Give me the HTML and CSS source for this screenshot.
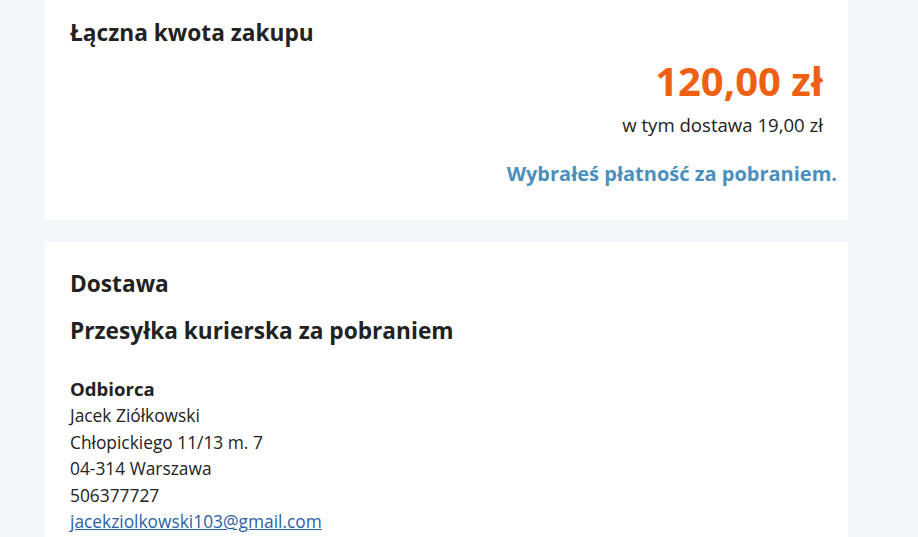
FILE: index.html
```html
<!DOCTYPE html>
<html lang="pl">
<head>
<meta charset="utf-8">
<link rel="stylesheet" href="styles.css">
</head>
<body>
<div class="page">
  <section class="card summary">
    <h2 class="title">Łączna kwota zakupu</h2>
    <div class="totals">
      <div class="price">120,00 zł</div>
      <div class="delivery-cost">w tym dostawa 19,00 zł</div>
    </div>
    <p class="payment">Wybrałeś płatność za pobraniem.</p>
  </section>
  <section class="card shipping">
    <h2 class="title">Dostawa</h2>
    <h2 class="title method">Przesyłka kurierska za pobraniem</h2>
    <div class="recipient">
      <h3 class="recipient-label">Odbiorca</h3>
      <div class="line">Jacek Ziółkowski</div>
      <div class="line">Chłopickiego 11/13 m. 7</div>
      <div class="line">04-314 Warszawa</div>
      <div class="line">506377727</div>
      <div class="line"><a class="mail" href="#">jacekziolkowski103@gmail.com</a></div>
    </div>
  </section>
</div>
</body>
</html>
```
FILE: styles.css
```css
* { box-sizing: border-box; }
html, body { margin: 0; padding: 0; }
body {
  background: #f3f6fa;
  font-family: "Open Sans", "Noto Sans", sans-serif;
  color: #222;
  height: 537px;
  overflow: hidden;
}
.page {
  width: 803px;
  margin-left: 45px;
  display: flex;
  flex-direction: column;
  gap: 22px;
}
.card {
  background: #fff;
}
.summary {
  padding: 18px 11px 25px 25px;
  height: 220px;
}
.title {
  margin: 0;
  font-size: 22.7px;
  line-height: 30px;
  font-weight: 700;
  color: #222;
}
.totals {
  text-align: right;
  padding-right: 14px;
  margin-top: 6px;
}
.price {
  font-size: 40px;
  line-height: 54px;
  font-weight: 700;
  color: #ee6014;
}
.delivery-cost {
  font-size: 18.6px;
  line-height: 26px;
  margin-top: 4px;
}
.payment {
  margin: 22px 0 0;
  text-align: right;
  font-size: 20px;
  line-height: 27px;
  font-weight: 700;
  color: #4a8fbd;
}
.shipping {
  padding: 27px 25px 20px 25px;
}
.method {
  margin-top: 17px;
}
.recipient {
  margin-top: 30px;
}
.recipient-label {
  margin: 0;
  font-size: 18.6px;
  line-height: 26px;
  font-weight: 700;
}
.line {
  font-size: 17.35px;
  line-height: 26.5px;
}
.mail {
  color: #2d5fa6;
  text-decoration: underline;
}
```
